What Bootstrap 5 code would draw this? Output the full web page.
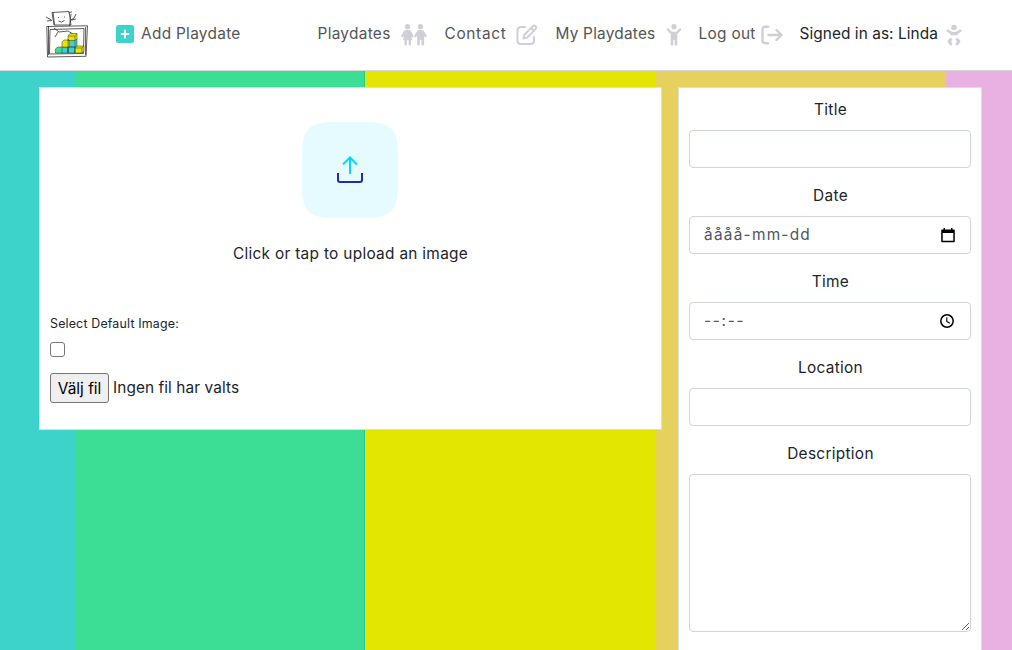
<!DOCTYPE html>
<html lang="en">
<head>
<meta charset="utf-8">
<meta name="viewport" content="width=device-width, initial-scale=1">
<title>Add Playdate</title>
<link rel="stylesheet" href="https://cdn.jsdelivr.net/npm/bootstrap@5.3.0/dist/css/bootstrap.min.css">
<style>
body{font-family:Inter,"Open Sans",sans-serif;font-size:15.4px;line-height:24px;letter-spacing:.3px;color:#212529;height:650px;overflow:hidden;
background:linear-gradient(90deg,#3dd3ca 76px,#3bde94 76px 364px,#2ec783 364px 365px,#e3e600 365px 655px,#e6d15f 655px 946px,#e9b1e2 946px)}
.topbar{height:71px;border-bottom:1px solid #d8d8dc;padding:0 0 0 46px;background:#fff}
.topbar .nav-link{padding:0;color:#555;white-space:nowrap}
.topbar .nav-link.me{color:#212529;letter-spacing:.07px}
.topbar .cap{display:block;position:relative;top:-1px}
.main-links{margin-left:68.500px}
.main-links svg{margin-left:-.5px}
.tint{color:#d0ced7}
.board{padding:16px 30px 0 39px;height:579px}
.panel{background:#fff;border:1px solid #dcdde3}
.upload-panel{width:623px;height:343px;padding:34px 10px 0}
.form-panel{width:304px;height:563px;padding:10px 10px 0;border-bottom:0}
.form-panel .form-label{display:block;text-align:center;margin-bottom:8px;padding-left:1px}
.form-panel .form-control{height:38px;border-color:#ced4da;border-radius:4px;padding:6px 14px;font-size:15.4px}
.form-panel textarea.form-control{height:158px}
.muted-val{color:#50565e}
.hint{font-size:12.4px;line-height:20px;letter-spacing:.18px}
.tick{width:15px;height:15px;border:1px solid #767676;border-radius:3px;appearance:none;background:#fff;display:block;margin:0}
.pick{width:59px;height:30px;background:#efefef;border:1px solid #767676;border-radius:3px;padding:0;color:#000;font-size:15.4px;line-height:27px;letter-spacing:0}
</style>
</head>
<body>
<nav class="topbar navbar navbar-expand flex-nowrap align-items-center">
  <a href="#" class="d-block" style="line-height:0">
    <svg width="42" height="47" viewBox="0 0 42 47" fill="none" stroke="#333" stroke-width=".8" stroke-linejoin="round" style="position:relative;top:-1px">
      <path d="M6 1.500 23 .5 25 14 H8Z M7 1 8.500 14 M22.500 2 26 .8 M25 3 23.500 15"/>
      <path d="M0 6 5.500 9 M1 10 6 9.500 M25 9 28 7 30 3 M25 9 30 8"/>
      <path d="M12 6.500h1 M18 6h1 M12.500 10q3 2.500 6-.5 M8 17l5 4 9-1 5 3 M12 21l-3 5"/>
      <path d="M.8 15.500 41.500 14.800 40 45.300 1.500 46Z M4 18.500 38 17.500 37.500 42.500 3.500 43Z M2.500 15v29 M39.600 16v28"/>
      <g stroke-width=".5"><path fill="#3bde94" d="M9.500 38l2-2h5v6h-7z"/><path fill="#3dd3ca" d="M16 36h6v6h-6zM22 36h7v6h-7zM22 30l2-2h7v8h-9z"/>
      <path fill="#e3e600" d="M16 31l2-2h5v7h-7zM22 25l2-2.500h7v5l-2 2h-7zM29 37l2-2h7v5l-2 2h-7z"/>
      <path d="M22 25h7l2-2.500M29 25v17M22 28v14M29 37h7l2-2M36 37v5"/></g>
    </svg>
  </a>
  <a href="#" class="nav-link d-flex align-items-center" style="margin-left:28px">
    <svg width="18" height="18" viewBox="0 0 18 18" style="position:relative;top:-1px"><rect width="18" height="18" rx="2.500" fill="#3dd3ca"/><path d="M9 5.500v7M5.500 9h7" stroke="#fff" stroke-width="2" stroke-linecap="round"/></svg>
    <span class="cap" style="margin-left:7px;width:100px">Add Playdate</span>
  </a>
  <div class="main-links navbar-nav flex-row">
    <a href="#" class="nav-link d-flex align-items-center" style="width:127px"><span class="cap" style="width:84px">Playdates</span>
      <svg class="tint" width="26" height="22" viewBox="0 0 26 22" fill="currentColor"><circle cx="6.500" cy="2.700" r="2.600"/><circle cx="19.500" cy="2.700" r="2.600"/><path d="M5 6h3q1.200 0 2 1.300l2.400 4.200q.5 1.200-.5 1.700-1 .4-1.600-.5L10 11.500l1.300 4.500H10v4.300q0 1.200-1.200 1.200t-1.200-1.200V16H5.900v4.300q0 1.200-1.200 1.200t-1.200-1.200V16H2L3 11.500l-.6 1.200q-.6.900-1.600.5-1-.5-.5-1.700L3 7.300Q3.800 6 5 6Z"/><path d="M18 6h3q1.200 0 2 1.300l2.500 4.200q.5 1.200-.5 1.700-1 .4-1.600-.5L23.100 11v9.300q0 1.200-1.300 1.200t-1.300-1.200V16h-1.700v4.300q0 1.200-1.300 1.200t-1.300-1.200V11l-.8 1.700q-.6.900-1.600.5-1-.5-.5-1.700L16 7.300Q16.800 6 18 6Z"/></svg></a>
    <a href="#" class="nav-link d-flex align-items-center" style="width:111px"><span class="cap" style="width:72px;letter-spacing:.68px">Contact</span>
      <svg class="tint" width="22" height="22" viewBox="0 0 22 22" fill="none" stroke="currentColor" stroke-width="2" stroke-linecap="round" stroke-linejoin="round"><path d="M9 3H5Q1.500 3 1.500 6.500v10Q1.500 20 5 20h9.500q3.500 0 3.500-3.500V13"/><path d="M7.500 14.500l.8-3.800 8.600-8.600q1.200-1 2.500.2 1.400 1.300.2 2.600l-8.400 8.700zM15 4l3 3"/></svg></a>
    <a href="#" class="nav-link d-flex align-items-center" style="width:143px"><span class="cap" style="width:111px;letter-spacing:.22px">My Playdates</span>
      <svg class="tint" width="16" height="22" viewBox="0 0 16 22" fill="currentColor"><circle cx="8" cy="2.700" r="2.600"/><path d="M2 5.500 4.500 8.200Q5.500 9 6.500 9h3q1 0 2-.8L14 5.500" fill="none" stroke="currentColor" stroke-width="2.400" stroke-linecap="round"/><path d="M4.700 8h6.600v12.400q0 1.200-1.300 1.200t-1.300-1.200V16H7.300v4.400q0 1.200-1.300 1.200T4.700 20.400Z"/></svg></a>
    <a href="#" class="nav-link d-flex align-items-center" style="width:101px"><span class="cap" style="width:63px">Log out</span>
      <svg class="tint" width="22" height="20" viewBox="0 0 22 20" fill="none" stroke="currentColor" stroke-width="2.400" stroke-linecap="round" stroke-linejoin="round"><path d="M7 1.700H4.500Q1.500 1.700 1.500 4.700v10.600q0 3 3 3H7M7.500 10h13M15.500 5l5 5-5 5"/></svg></a>
    <a href="#" class="nav-link me d-flex align-items-center"><span class="cap" style="width:147px">Signed in as: Linda</span>
      <svg class="tint" width="16" height="22" viewBox="0 0 16 22" fill="currentColor"><circle cx="8" cy="3.500" r="2.800"/><path d="M1.700 6.800Q8 12 14.300 6.800M5.500 9.900h5" fill="none" stroke="currentColor" stroke-width="2.600" stroke-linecap="round"/><path d="M4.800 15.500 3.200 17.300 5 20M11.200 15.500l1.600 1.800L11 20" fill="none" stroke="currentColor" stroke-width="3" stroke-linecap="round" stroke-linejoin="round"/></svg></a>
  </div>
</nav>
<main class="board d-flex align-items-start gap-3">
  <section class="panel upload-panel">
    <div class="text-center">
      <svg class="d-block mx-auto" width="96" height="96" viewBox="0 0 96 96" fill="none" style="position:relative;left:-1px"><path d="M0 30C0 8 8 0 30 0H66C88 0 96 8 96 30V66C96 88 88 96 66 96H30C8 96 0 88 0 66Z" fill="#e6fbff"/><path d="M48 52V36M41 42.500l7-7 7 7" stroke="#00d9ff" stroke-width="2"/><path d="M36 51v7q0 2 2 2h20q2 0 2-2v-7" stroke="#2429af" stroke-width="2"/></svg>
      <div style="margin-top:24px">Click or tap to upload an image</div>
    </div>
    <div class="hint" style="margin-top:48px">Select Default Image:</div>
    <input type="checkbox" class="tick" style="margin-top:8px" aria-label="Select Default Image">
    <div class="d-flex align-items-center" style="margin-top:16px"><button class="pick" type="button">Välj fil</button><span style="margin-left:4px;letter-spacing:.08px">Ingen fil har valts</span></div>
  </section>
  <form class="panel form-panel">
    <div class="mb-3"><label class="form-label" for="t">Title</label><input id="t" class="form-control"></div>
    <div class="mb-3"><span class="form-label">Date</span>
      <div class="form-control muted-val d-flex justify-content-between align-items-center"><span style="letter-spacing:1.25px">åååå-mm-dd</span>
        <svg width="16" height="16" viewBox="0 0 16 16"><path fill="#000" d="M3.500 1H5v1.500h6V1h1.500v1.500H14q.8 0 .8.800v11.200q0 .8-.8.800H2q-.8 0-.8-.8V3.300q0-.8.800-.8h1.500zM2.700 6v7.800h10.600V6z" fill-rule="evenodd"/></svg></div></div>
    <div class="mb-3"><span class="form-label">Time</span>
      <div class="form-control muted-val d-flex justify-content-between align-items-center"><span style="letter-spacing:1.7px">--:--</span>
        <svg width="16" height="16" viewBox="0 0 16 16" fill="none" stroke="#000" style="margin-right:1px"><circle cx="8" cy="8" r="6.200" stroke-width="1.500"/><path d="M7.800 4.300v4.200l3 1.800" stroke-width="1.100"/></svg></div></div>
    <div class="mb-3"><label class="form-label" for="l">Location</label><input id="l" class="form-control"></div>
    <div><label class="form-label" for="d">Description</label><textarea id="d" class="form-control"></textarea></div>
  </form>
</main>
<script src="https://cdn.jsdelivr.net/npm/bootstrap@5.3.0/dist/js/bootstrap.bundle.min.js"></script>
</body>
</html>
